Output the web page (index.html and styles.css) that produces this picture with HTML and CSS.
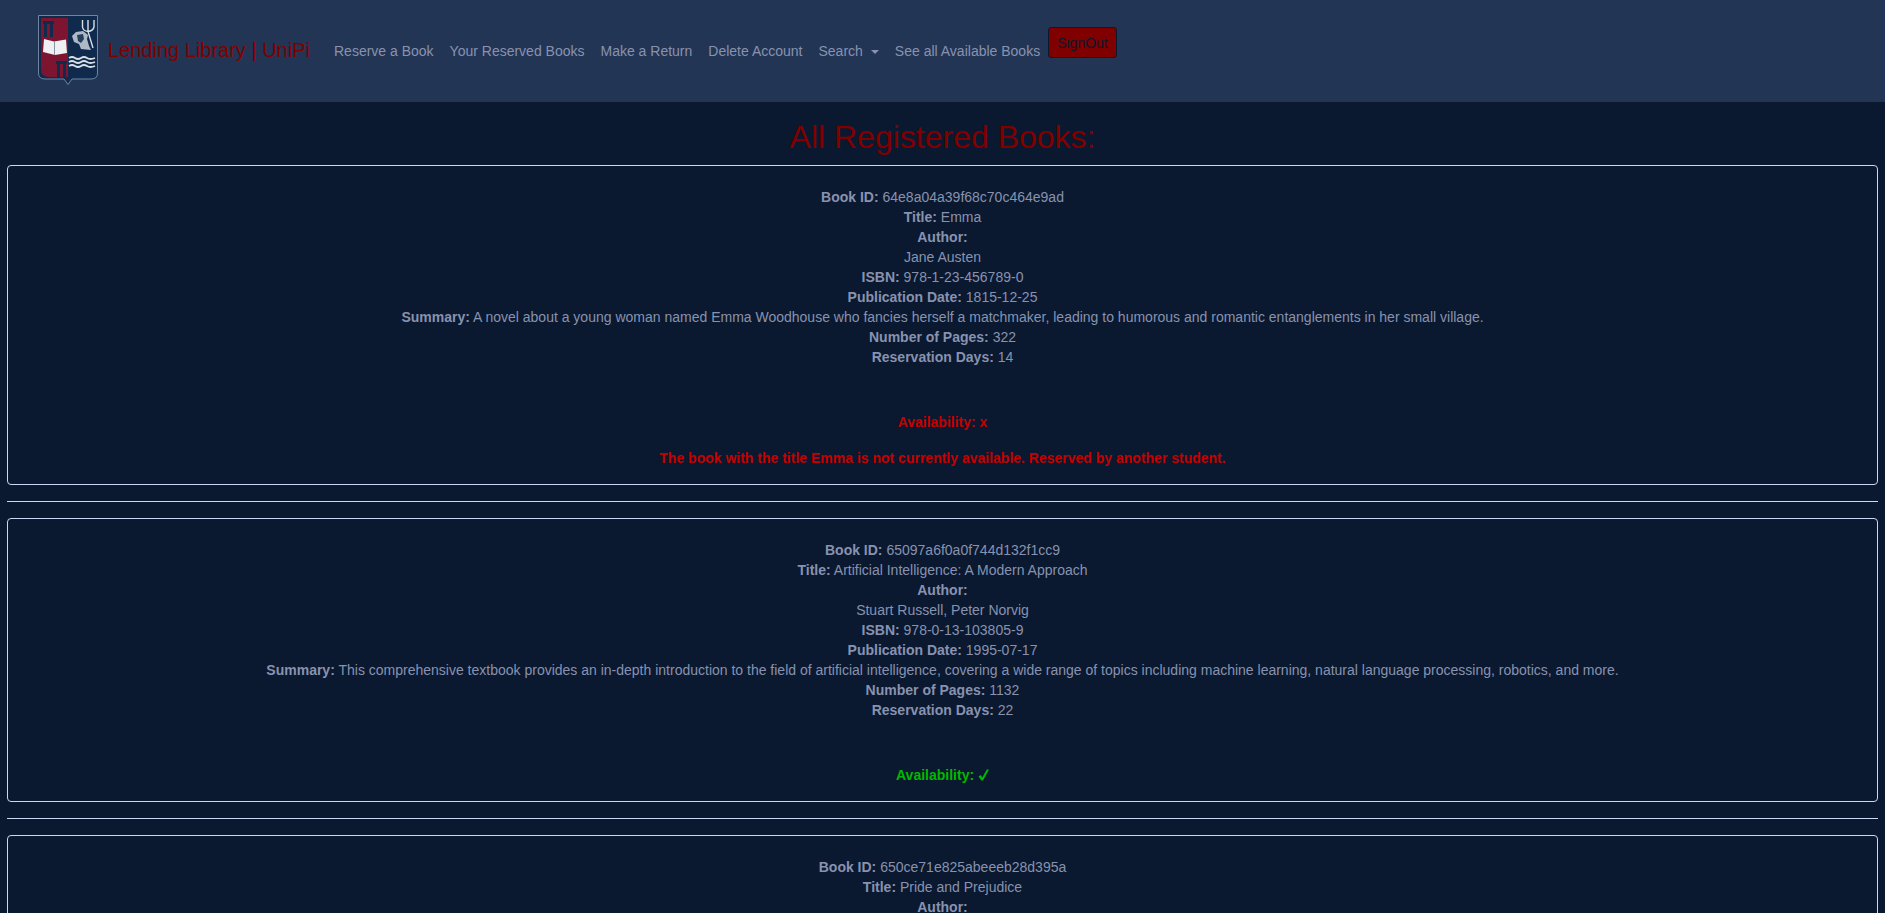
FILE: index.html
```html
<!DOCTYPE html>
<html lang="en">
<head>
    <meta charset="UTF-8">
    <meta name="viewport" content="width=device-width, initial-scale=1.0">
    <title>All Registered Books</title>
    <link rel="stylesheet" href="styles.css">
</head>
<body>
    <nav class="navbar">
        <a class="brand" href="#">
            <svg class="logo" viewBox="0 0 60 70" width="60" height="70">
                <path d="M.5 .5H59.5V58Q59.5 64 53 64H34L30 69.5L26 64H7Q.5 64 .5 58Z" fill="#0f2a4d" stroke="#6f86a3"/>
                <path d="M3 3H30V62H11Q3 62 3 54Z" fill="#7d1530"/>
                <path d="M5 6H16V9H15V22H12V9H9V22H6V9H5Z" fill="#0f2a4d"/>
                <path d="M18 46H29V49H28V62H25V49H22V62H19V49H18Z" fill="#0f2a4d"/>
                <path d="M6 24L16 26.5L28 24.5L29 38L17 40L5 37Z" fill="#eef0f3"/>
                <path d="M16.5 26.5V40" stroke="#8b93a0"/>
                <path d="M44.5 5V12Q45 16 50 16.5Q55 16 56 12V5M50 5V16.5L55 33" fill="none" stroke="#d9dfe6" stroke-width="1.4"/>
                <path d="M34 21L38 17L45 16L50 20L49 24L51 31L53 35L43 34L41 29L36 27Z" fill="#aeb9c6"/>
                <path d="M39 20L45 19L46 24L43 28L40 26Z" fill="#263f5e"/>
                <path d="M31 43Q34 41 37 43T43 43T49 43T57 43M31 47Q34 45 37 47T43 47T49 47T57 47M31 51Q34 49 37 51T43 51T49 51T57 51" fill="none" stroke="#d9dfe6" stroke-width="1.8"/>
            </svg>
            <span class="brand-text">Lending Library | UniPi</span>
        </a>
        <ul class="nav-list">
            <li><a class="nav-link" href="#">Reserve a Book</a></li>
            <li><a class="nav-link" href="#">Your Reserved Books</a></li>
            <li><a class="nav-link" href="#">Make a Return</a></li>
            <li><a class="nav-link" href="#">Delete Account</a></li>
            <li><a class="nav-link dropdown" href="#">Search</a></li>
            <li><a class="nav-link" href="#">See all Available Books</a></li>
        </ul>
        <button class="signout">SignOut</button>
    </nav>

    <h2 class="page-title">All Registered Books:</h2>

    <div class="book">
        <p class="info">
            <b>Book ID:</b> 64e8a04a39f68c70c464e9ad<br>
            <b>Title:</b> Emma<br>
            <b>Author:</b><br>
            Jane Austen<br>
            <b>ISBN:</b> 978-1-23-456789-0<br>
            <b>Publication Date:</b> 1815-12-25<br>
            <b>Summary:</b> A novel about a young woman named Emma Woodhouse who fancies herself a matchmaker, leading to humorous and romantic entanglements in her small village.<br>
            <b>Number of Pages:</b> 322<br>
            <b>Reservation Days:</b> 14
        </p>
        <p class="status no">Availability: x</p>
        <p class="status no">The book with the title Emma is not currently available. Reserved by another student.</p>
    </div>
    <hr>

    <div class="book">
        <p class="info">
            <b>Book ID:</b> 65097a6f0a0f744d132f1cc9<br>
            <b>Title:</b> Artificial Intelligence: A Modern Approach<br>
            <b>Author:</b><br>
            Stuart Russell, Peter Norvig<br>
            <b>ISBN:</b> 978-0-13-103805-9<br>
            <b>Publication Date:</b> 1995-07-17<br>
            <b>Summary:</b> This comprehensive textbook provides an in-depth introduction to the field of artificial intelligence, covering a wide range of topics including machine learning, natural language processing, robotics, and more.<br>
            <b>Number of Pages:</b> 1132<br>
            <b>Reservation Days:</b> 22
        </p>
        <p class="status yes">Availability:
            <svg class="check" viewBox="0 0 11 12" width="11" height="12"><path d="M.5 7.5L2.8 6L4.3 8.5L8.8 .5H11L5 11.5H3.4Z" fill="#00b800"/></svg>
        </p>
    </div>
    <hr>

    <div class="book">
        <p class="info">
            <b>Book ID:</b> 650ce71e825abeeeb28d395a<br>
            <b>Title:</b> Pride and Prejudice<br>
            <b>Author:</b>
        </p>
    </div>
</body>
</html>
```

FILE: styles.css
```css
html, body {
    height: 100%;
}
body {
    margin: 0;
    background-color: #0a192f;
    color: #8892b0;
    font-family: "Liberation Sans", Arial, sans-serif;
    font-size: 14px;
    line-height: 20px;
    overflow: hidden;
}
a {
    text-decoration: none;
}
.navbar {
    display: flex;
    align-items: flex-start;
    height: 102px;
    box-sizing: border-box;
    padding: 15px 16px 0 38px;
    background-color: #233554;
}
.brand {
    display: flex;
    align-items: center;
    gap: 10px;
    margin-right: 16px;
}
.logo {
    display: block;
}
.brand-text {
    color: #800000;
    font-size: 20px;
}
.nav-list {
    display: flex;
    margin: 26px 0 0;
    padding: 0;
    list-style: none;
}
.nav-link {
    display: block;
    padding: 0 8px;
    color: #8892b0;
}
.dropdown::after {
    content: "";
    display: inline-block;
    margin-left: 8px;
    vertical-align: 2px;
    border-top: 4px solid;
    border-left: 4px solid transparent;
    border-right: 4px solid transparent;
}
.signout {
    height: 31px;
    margin: 12px 0 0;
    padding: 0 8px;
    background-color: #800000;
    border: 1px solid #0a192f;
    border-radius: 3px;
    color: #0a192f;
    font-family: inherit;
    font-size: 14px;
}
.page-title {
    margin: 16px 0 9px;
    color: #800000;
    font-size: 32px;
    font-weight: 400;
    line-height: 38px;
    text-align: center;
}
.book {
    margin: 0 7px;
    padding: 21px 16px 0;
    border: 1px solid #ccd6f6;
    border-radius: 4px;
    text-align: center;
}
.info {
    margin: 0 0 45px;
}
.status {
    margin: 0 0 16px;
    font-weight: 700;
}
.no {
    color: #c40000;
}
.yes {
    color: #00b800;
}
.check {
    vertical-align: -1px;
}
hr {
    height: 1px;
    margin: 16px 7px;
    border: 0;
    background-color: #ccd6f6;
}
```
